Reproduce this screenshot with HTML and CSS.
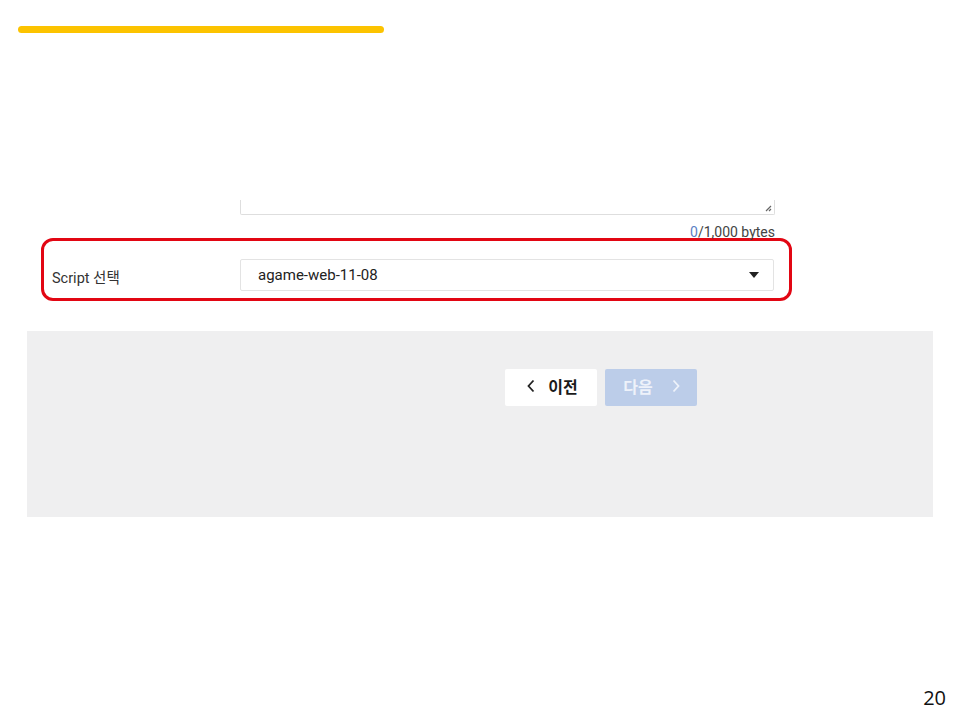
FILE: index.html
```html
<!DOCTYPE html>
<html lang="ko">
<head>
<meta charset="utf-8">
<link rel="stylesheet" href="styles.css">
</head>
<body>
<div class="slide">
  <div class="accent"></div>
  <div class="form">
    <div class="textarea-row">
      <div class="textarea">
        <svg class="grip" width="8" height="8" viewBox="0 0 8 8"><path d="M7 2 L2 7 M7 5 L5 7" stroke="#666" stroke-width="1.2" fill="none"/></svg>
      </div>
    </div>
    <div class="counter"><span class="count">0</span>/1,000 bytes</div>
    <div class="highlight">
      <div class="label">Script 선택</div>
      <div class="select">
        <span class="select-value">agame-web-11-08</span>
        <span class="caret"></span>
      </div>
    </div>
  </div>
  <div class="footer">
    <button class="btn btn-prev"><svg width="10" height="16" viewBox="0 0 10 16"><path d="M7.5 2.5 L2.5 8 L7.5 13.5" stroke="#222" stroke-width="1.8" fill="none"/></svg><span>이전</span></button>
    <button class="btn btn-next"><span>다음</span><svg width="10" height="16" viewBox="0 0 10 16"><path d="M2.5 2.5 L7.5 8 L2.5 13.5" stroke="#eef2fa" stroke-width="1.8" fill="none"/></svg></button>
  </div>
  <div class="page-num">20</div>
</div>
</body>
</html>
```
FILE: styles.css
```css
* { box-sizing: border-box; }
html, body { margin: 0; padding: 0; background: #fff; }
body { font-family: Roboto, "Noto Sans CJK KR", "Noto Sans", sans-serif; }
.slide {
  width: 960px;
  height: 720px;
  position: relative;
  overflow: hidden;
}
.accent {
  margin: 26px 0 0 18px;
  width: 366px;
  height: 7px;
  border-radius: 4px;
  background: #fcc300;
}
.form {
  margin-top: 167px;
  padding-left: 41px;
  width: 792px;
}
.textarea-row {
  padding-left: 199px;
  padding-right: 17px;
}
.textarea {
  height: 15px;
  border: 1px solid #dedede;
  border-top: none;
  border-radius: 0 0 2px 2px;
  position: relative;
}
.grip { position: absolute; right: 2px; bottom: 2px; }
.counter {
  text-align: right;
  padding-right: 17px;
  font-size: 14px;
  color: #444;
  line-height: 16px;
  margin-top: 9px;
  height: 14px;
  position: relative;
  z-index: 1;
}
.count { color: #5b7fc4; }
.highlight {
  height: 63px;
  border: 3px solid #e20613;
  border-radius: 12px;
  display: flex;
  align-items: center;
  padding: 0 15px 0 8px;
}
.label {
  width: 188px;
  font-size: 14.5px;
  color: #333;
  padding-top: 13px;
}
.select {
  flex: 1;
  height: 32px;
  border: 1px solid #e3e3e3;
  border-radius: 2px;
  display: flex;
  align-items: center;
  justify-content: space-between;
  padding: 0 14px 0 17px;
  margin-top: 10px;
}
.select-value { font-size: 15px; color: #222; }
.caret {
  width: 0; height: 0;
  border-left: 5px solid transparent;
  border-right: 5px solid transparent;
  border-top: 6px solid #222;
}
.footer {
  margin: 30px 0 0 27px;
  width: 906px;
  height: 186px;
  background: #efeff0;
  display: flex;
  gap: 8px;
  padding: 38px 0 0 478px;
  align-items: flex-start;
}
.btn {
  width: 92px;
  height: 37px;
  border: none;
  border-radius: 2px;
  display: flex;
  align-items: center;
  justify-content: center;
  gap: 12px;
  font-family: "Noto Sans CJK KR", sans-serif;
  font-weight: 700;
  font-size: 16px;
  line-height: 1;
  padding: 0 0 4px 2px;
}
.btn-prev { background: #fff; color: #1a1a1a; }
.btn-next { background: #bccde9; color: #eef2fa; gap: 18px; }
.page-num {
  position: absolute;
  right: 14px;
  top: 684px;
  font-family: "Open Sans", "Liberation Sans", sans-serif;
  font-size: 20px;
  color: #111;
}
```
